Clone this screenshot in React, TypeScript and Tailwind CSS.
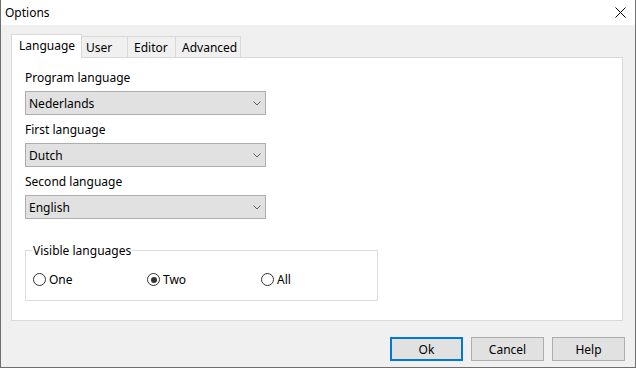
import React from "react";

function Select({ value }: { value: string }) {
  return (
    <div className="w-[241px] h-[24px] bg-[#e1e1e1] border border-[#adadad] flex items-center justify-between pl-[3px] pr-[4px]">
      <span className="leading-[16px] pt-[2px]">{value}</span>
      <svg width="8" height="5" viewBox="0 0 8 5" className="block">
        <polyline points="0.5,0.5 4,4 7.5,0.5" fill="none" stroke="#606060" strokeWidth="1" />
      </svg>
    </div>
  );
}

function Radio({ label, checked }: { label: string; checked?: boolean }) {
  return (
    <div className="w-[114px] h-[17px] flex items-center gap-[3px]">
      <div className="w-[13px] h-[13px] rounded-full border border-[#333333] bg-white flex items-center justify-center">
        {checked && <div className="w-[6px] h-[6px] rounded-full bg-[#333333]" />}
      </div>
      <span className="leading-[16px] pt-[1px]">{label}</span>
    </div>
  );
}

function Button({ label, primary }: { label: string; primary?: boolean }) {
  return (
    <div
      className={
        primary
          ? "w-[73px] h-[24px] bg-[#e1e1e1] border-2 border-[#0078d7] flex items-center justify-center"
          : "w-[73px] h-[24px] bg-[#e1e1e1] border border-[#adadad] flex items-center justify-center"
      }
    >
      <span className="leading-[16px] pt-[2px]">{label}</span>
    </div>
  );
}

export default function App() {
  return (
    <div className="w-[636px] h-[368px] bg-[#f0f0f0] border-x border-b border-[#6e6e6e] flex flex-col font-['Noto_Sans',sans-serif] text-[12px] text-black">
      <div className="h-[25px] bg-white flex items-center justify-between pl-[4px] pr-[9px]">
        <span className="leading-[16px] pt-[1px]">Options</span>
        <svg width="11" height="11" viewBox="0 0 11 11" className="block">
          <line x1="0.5" y1="0.5" x2="10.5" y2="10.5" stroke="#000" strokeWidth="1" />
          <line x1="10.5" y1="0.5" x2="0.5" y2="10.5" stroke="#000" strokeWidth="1" />
        </svg>
      </div>
      <div className="flex-1 flex flex-col px-[10px] pt-[9px]">
        <div className="flex items-end h-[23px]">
          <div className="relative z-10 -mb-px w-[71px] h-[24px] bg-white border-x border-t border-[#d9d9d9] pl-[7px] pt-[3px] leading-[16px]">
            Language
          </div>
          <div className="w-[46px] h-[21px] bg-[#f0f0f0] border-t border-r border-[#d9d9d9] pl-[4px] pt-[3px] leading-[16px]">
            User
          </div>
          <div className="w-[48px] h-[21px] bg-[#f0f0f0] border-t border-r border-[#d9d9d9] pl-[6px] pt-[3px] leading-[16px]">
            Editor
          </div>
          <div className="w-[65px] h-[21px] bg-[#f0f0f0] border-t border-r border-[#d9d9d9] pl-[6px] pt-[3px] leading-[16px]">
            Advanced
          </div>
        </div>
        <div className="w-[612px] h-[264px] bg-white border border-[#d9d9d9] pl-[13px] pt-[12px] flex flex-col">
          <div className="leading-[16px] mb-[5px]">Program language</div>
          <Select value="Nederlands" />
          <div className="leading-[16px] mt-[7px] mb-[5px]">First language</div>
          <Select value="Dutch" />
          <div className="leading-[16px] mt-[7px] mb-[5px]">Second language</div>
          <Select value="English" />
          <div className="relative mt-[31px] w-[353px] h-[51px] border border-[#dcdcdc] pl-[7px] pt-[20px] flex items-start">
            <div className="absolute top-[-8px] left-[6px] bg-white px-[1px] leading-[16px]">Visible languages</div>
            <Radio label="One" />
            <Radio label="Two" checked />
            <Radio label="All" />
          </div>
        </div>
        <div className="mt-[16px] flex justify-end gap-[8px]">
          <Button label="Ok" primary />
          <Button label="Cancel" />
          <Button label="Help" />
        </div>
      </div>
    </div>
  );
}
